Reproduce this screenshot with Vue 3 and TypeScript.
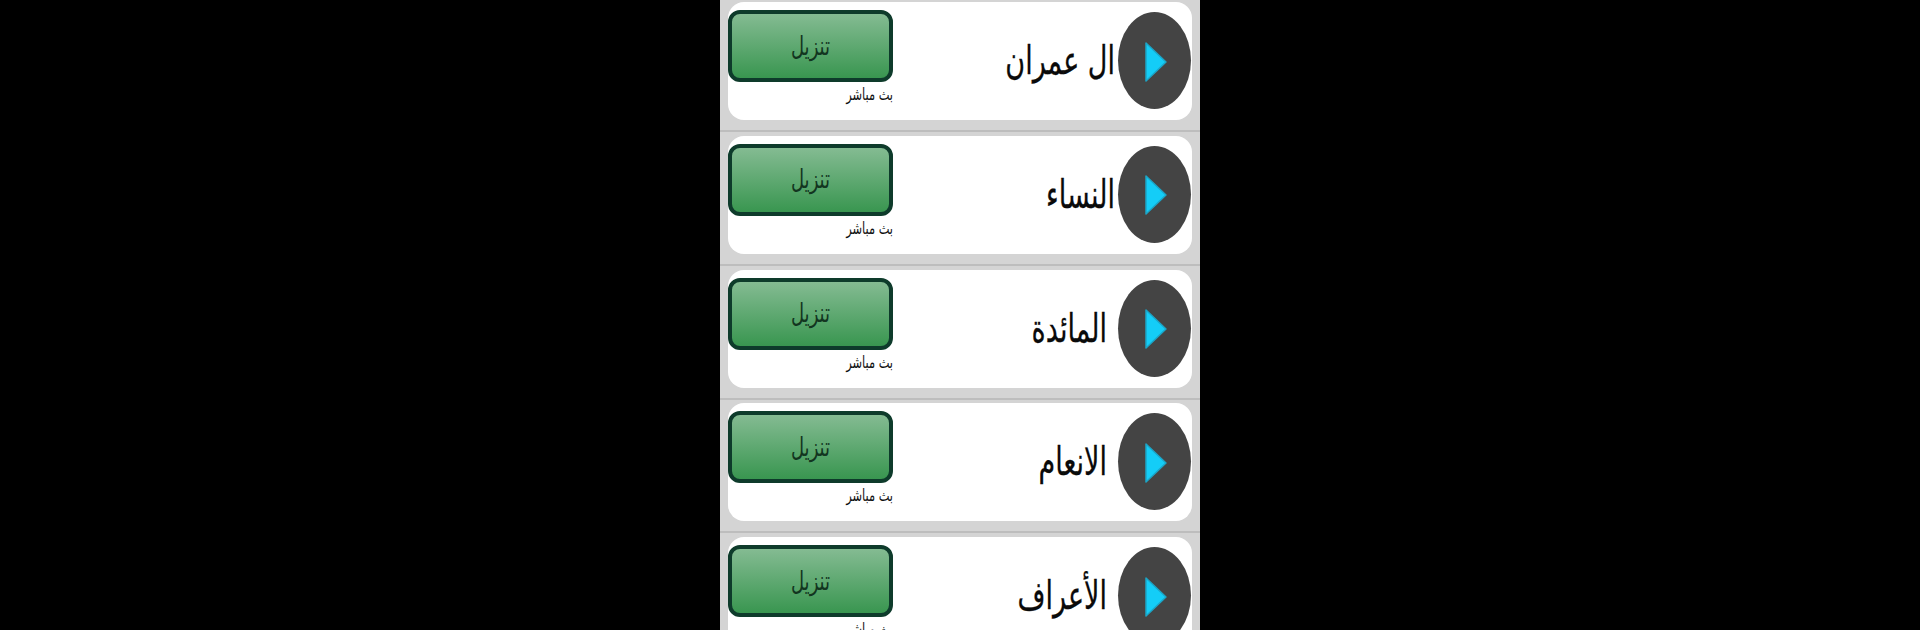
<script setup lang="ts">
interface Row { title: string; far: boolean }
const rows: Row[] = [
  { title: 'ال عمران', far: false },
  { title: 'النساء', far: false },
  { title: 'المائدة', far: true },
  { title: 'الانعام', far: true },
  { title: 'الأعراف', far: true },
]
</script>

<template>
  <main class="panel">
    <section v-for="r in rows" :key="r.title" class="row">
      <article class="card">
        <div class="actions">
          <button class="download" type="button"><span class="stretch">تنزيل</span></button>
          <span class="live"><span class="stretch">بث مباشر</span></span>
        </div>
        <div class="head">
          <span class="title" :class="{ far: r.far }" dir="rtl">{{ r.title }}</span>
          <span class="play">
            <svg width="26" height="44" viewBox="0 0 26 44">
              <polygon points="3,3 23,22 3,41" fill="#14cdf7" stroke="#1ba6c8" stroke-width="1.5" stroke-linejoin="round" />
            </svg>
          </span>
        </div>
      </article>
      <div class="rule"></div>
    </section>
  </main>
</template>

<style scoped>
.panel {
  width: 480px;
  height: 630px;
  margin: 0 auto;
  padding-top: 2px;
  box-sizing: border-box;
  overflow: hidden;
  background: #d4d4d4;
  font-family: "DejaVu Sans", "Noto Sans", sans-serif;
}
.row {
  height: 133.75px;
  box-sizing: border-box;
  padding: 0 8px;
}
.card {
  height: 118px;
  box-sizing: border-box;
  display: flex;
  justify-content: space-between;
  background: #fff;
  border-radius: 16px;
  padding: 8px 1px 0 0;
}
.rule {
  height: 2px;
  margin: 10px -8px 0;
  background: #bdbdbd;
}
.actions {
  width: 165px;
  display: flex;
  flex-direction: column;
  align-items: flex-end;
}
.download {
  width: 165px;
  height: 72px;
  box-sizing: border-box;
  padding: 0 0 2px;
  border: 4px solid #0e3b2b;
  border-radius: 12px;
  background: linear-gradient(#84bb92, #399650);
  color: #12351f;
  font-family: inherit;
  font-size: 18px;
  display: flex;
  align-items: center;
  justify-content: center;
}
.stretch {
  display: inline-block;
  transform: scaleY(1.45);
}
.live {
  margin-top: 4px;
  font-size: 11.4px;
  line-height: 16px;
  color: #111;
}
.head {
  display: flex;
  align-items: center;
  gap: 3px;
  height: 97px;
  margin-top: 2px;
}
.title {
  font-size: 27px;
  color: #0a0a0a;
  display: inline-block;
  transform: scaleY(1.45);
  -webkit-text-stroke: 0.2px #0a0a0a;
}
.title.far {
  margin-right: 8px;
}
.play {
  width: 73px;
  height: 97px;
  border-radius: 50%;
  background: #444444;
  display: flex;
  align-items: center;
  justify-content: center;
  padding: 2px 0 0 3px;
  box-sizing: border-box;
}
</style>

<style>
html, body {
  margin: 0;
  background: #000;
}
</style>
